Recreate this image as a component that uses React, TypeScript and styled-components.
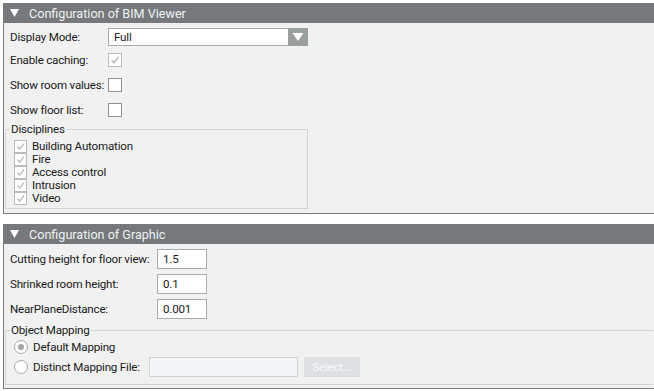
import React from 'react';
import styled, { createGlobalStyle } from 'styled-components';

const GlobalStyle = createGlobalStyle`
  html, body {
    margin: 0;
    padding: 0;
    background: #ffffff;
  }
  body {
    font-family: Roboto, 'Noto Sans', sans-serif;
    font-size: 11.6px;
    letter-spacing: -0.2px;
    color: #1a1a1a;
  }
`;

const Page = styled.div`
  width: 654px;
  height: 391px;
  padding: 3px 0 0 3px;
  box-sizing: border-box;
  display: flex;
  flex-direction: column;
  gap: 10px;
  overflow: hidden;
`;

const Panel = styled.section`
  background: #f1f1f1;
  border-left: 1px solid #7a7a7a;
  border-bottom: 1px solid #7a7a7a;
`;

const Header = styled.div`
  height: 20px;
  background: #75797b;
  color: #eef2f5;
  display: flex;
  align-items: center;
  gap: 10px;
  padding-left: 6px;
  font-size: 12.6px;
  letter-spacing: 0;
`;

const Body = styled.div<{ $pad?: string }>`
  padding: ${p => p.$pad || '3px 0 4px 6px'};
  display: flex;
  flex-direction: column;
`;

const Row = styled.div<{ $h: number; $label: number }>`
  height: ${p => p.$h}px;
  display: grid;
  grid-template-columns: ${p => p.$label}px auto;
  align-items: center;
`;

const Label = styled.span`
  white-space: nowrap;
`;

const Select = styled.div`
  width: 200px;
  height: 18px;
  box-sizing: border-box;
  background: #fff;
  border: 1px solid #a9abad;
  display: flex;
  align-items: center;
  padding-left: 5px;
  position: relative;
`;

const SelectArrow = styled.div`
  position: absolute;
  right: -1px;
  top: -1px;
  width: 20px;
  height: 18px;
  background: #999e9f;
  display: flex;
  align-items: center;
  justify-content: center;
`;

const Box = styled.div<{ $size: number; $disabled?: boolean }>`
  width: ${p => p.$size}px;
  height: ${p => p.$size}px;
  flex: none;
  box-sizing: border-box;
  border: 1px solid ${p => (p.$disabled ? '#b9bbbd' : '#8f9294')};
  background: #fff;
  display: flex;
  align-items: center;
  justify-content: center;
`;

const Group = styled.fieldset<{ $w?: string; $h: number; $mt?: number; $pt?: number }>`
  margin: ${p => p.$mt || 0}px 0 0 -5px;
  width: ${p => p.$w || 'auto'};
  height: ${p => p.$h}px;
  box-sizing: border-box;
  border: 1px solid #d2d4d5;
  border-right-color: ${p => (p.$w ? '#d2d4d5' : 'transparent')};
  padding: ${p => p.$pt ?? 2}px 0 0 8px;
  display: flex;
  flex-direction: column;
`;

const Legend = styled.legend`
  padding: 0 1px;
  margin-left: -4px;
  line-height: 13px;
`;

const CheckRow = styled.div`
  height: 13px;
  line-height: 13px;
  display: flex;
  align-items: center;
  gap: 5px;
`;

const TextInput = styled.div<{ $w: number }>`
  width: ${p => p.$w}px;
  height: 20px;
  box-sizing: border-box;
  background: #fff;
  border: 1px solid #a9abad;
  padding-left: 5px;
  display: flex;
  align-items: center;
`;

const RadioRow = styled.div`
  height: 20px;
  display: flex;
  align-items: center;
  gap: 5px;
`;

const Radio = styled.span<{ $on?: boolean }>`
  width: 14px;
  height: 14px;
  flex: none;
  box-sizing: border-box;
  border-radius: 50%;
  border: 1px solid #a9abad;
  background: #fff;
  display: flex;
  align-items: center;
  justify-content: center;
  &::after {
    content: '';
    width: 6px;
    height: 6px;
    border-radius: 50%;
    background: ${p => (p.$on ? '#a3a5a7' : 'transparent')};
  }
`;

const FileInput = styled.div`
  width: 149px;
  height: 20px;
  box-sizing: border-box;
  background: #f4f5f6;
  border: 1px solid #cfd3d6;
  margin-left: 4px;
`;

const Button = styled.div`
  width: 56px;
  height: 20px;
  background: #dde1e3;
  color: #f7f9fa;
  display: flex;
  align-items: center;
  justify-content: center;
  margin-left: 1px;
`;

const Check = ({ size = 14 }: { size?: number }) => (
  <svg width={size - 4} height={size - 4} viewBox="0 0 10 10">
    <path d="M1.5 5.2 L4 7.8 L8.8 1.8" fill="none" stroke="#b4b6b8" strokeWidth="1.4" />
  </svg>
);

const Triangle = () => (
  <svg width="9" height="8" viewBox="0 0 9 8">
    <path d="M0 0 L9 0 L4.5 8 Z" fill="#ffffff" />
  </svg>
);

const disciplines = ['Building Automation', 'Fire', 'Access control', 'Intrusion', 'Video'];

export default function App() {
  return (
    <>
      <GlobalStyle />
      <Page>
        <Panel>
          <Header>
            <Triangle />
            Configuration of BIM Viewer
          </Header>
          <Body>
            <Row $h={22} $label={98}>
              <Label>Display Mode:</Label>
              <Select>
                Full
                <SelectArrow>
                  <svg width="12" height="10" viewBox="0 0 12 10">
                    <path d="M0.5 1 L11.5 1 L6 9 Z" fill="#ffffff" />
                  </svg>
                </SelectArrow>
              </Select>
            </Row>
            <Row $h={24} $label={98}>
              <Label>Enable caching:</Label>
              <Box $size={14} $disabled>
                <Check />
              </Box>
            </Row>
            <Row $h={25} $label={98}>
              <Label>Show room values:</Label>
              <Box $size={14} />
            </Row>
            <Row $h={26} $label={98}>
              <Label>Show floor list:</Label>
              <Box $size={14} />
            </Row>
            <Group $w="303px" $h={86} $pt={4}>
              <Legend>Disciplines</Legend>
              {disciplines.map(d => (
                <CheckRow key={d}>
                  <Box $size={13} $disabled>
                    <Check size={13} />
                  </Box>
                  {d}
                </CheckRow>
              ))}
            </Group>
          </Body>
        </Panel>
        <Panel>
          <Header>
            <Triangle />
            Configuration of Graphic
          </Header>
          <Body $pad="2px 0 3px 6px">
            <Row $h={25} $label={147}>
              <Label>Cutting height for floor view:</Label>
              <TextInput $w={50}>1.5</TextInput>
            </Row>
            <Row $h={25} $label={147}>
              <Label>Shrinked room height:</Label>
              <TextInput $w={50}>0.1</TextInput>
            </Row>
            <Row $h={25} $label={147}>
              <Label>NearPlaneDistance:</Label>
              <TextInput $w={50}>0.001</TextInput>
            </Row>
            <Group $h={61} $mt={3} $pt={0}>
              <Legend>Object Mapping</Legend>
              <RadioRow>
                <Radio $on />
                Default Mapping
              </RadioRow>
              <RadioRow>
                <Radio />
                Distinct Mapping File:
                <FileInput />
                <Button>Select...</Button>
              </RadioRow>
            </Group>
          </Body>
        </Panel>
      </Page>
    </>
  );
}
